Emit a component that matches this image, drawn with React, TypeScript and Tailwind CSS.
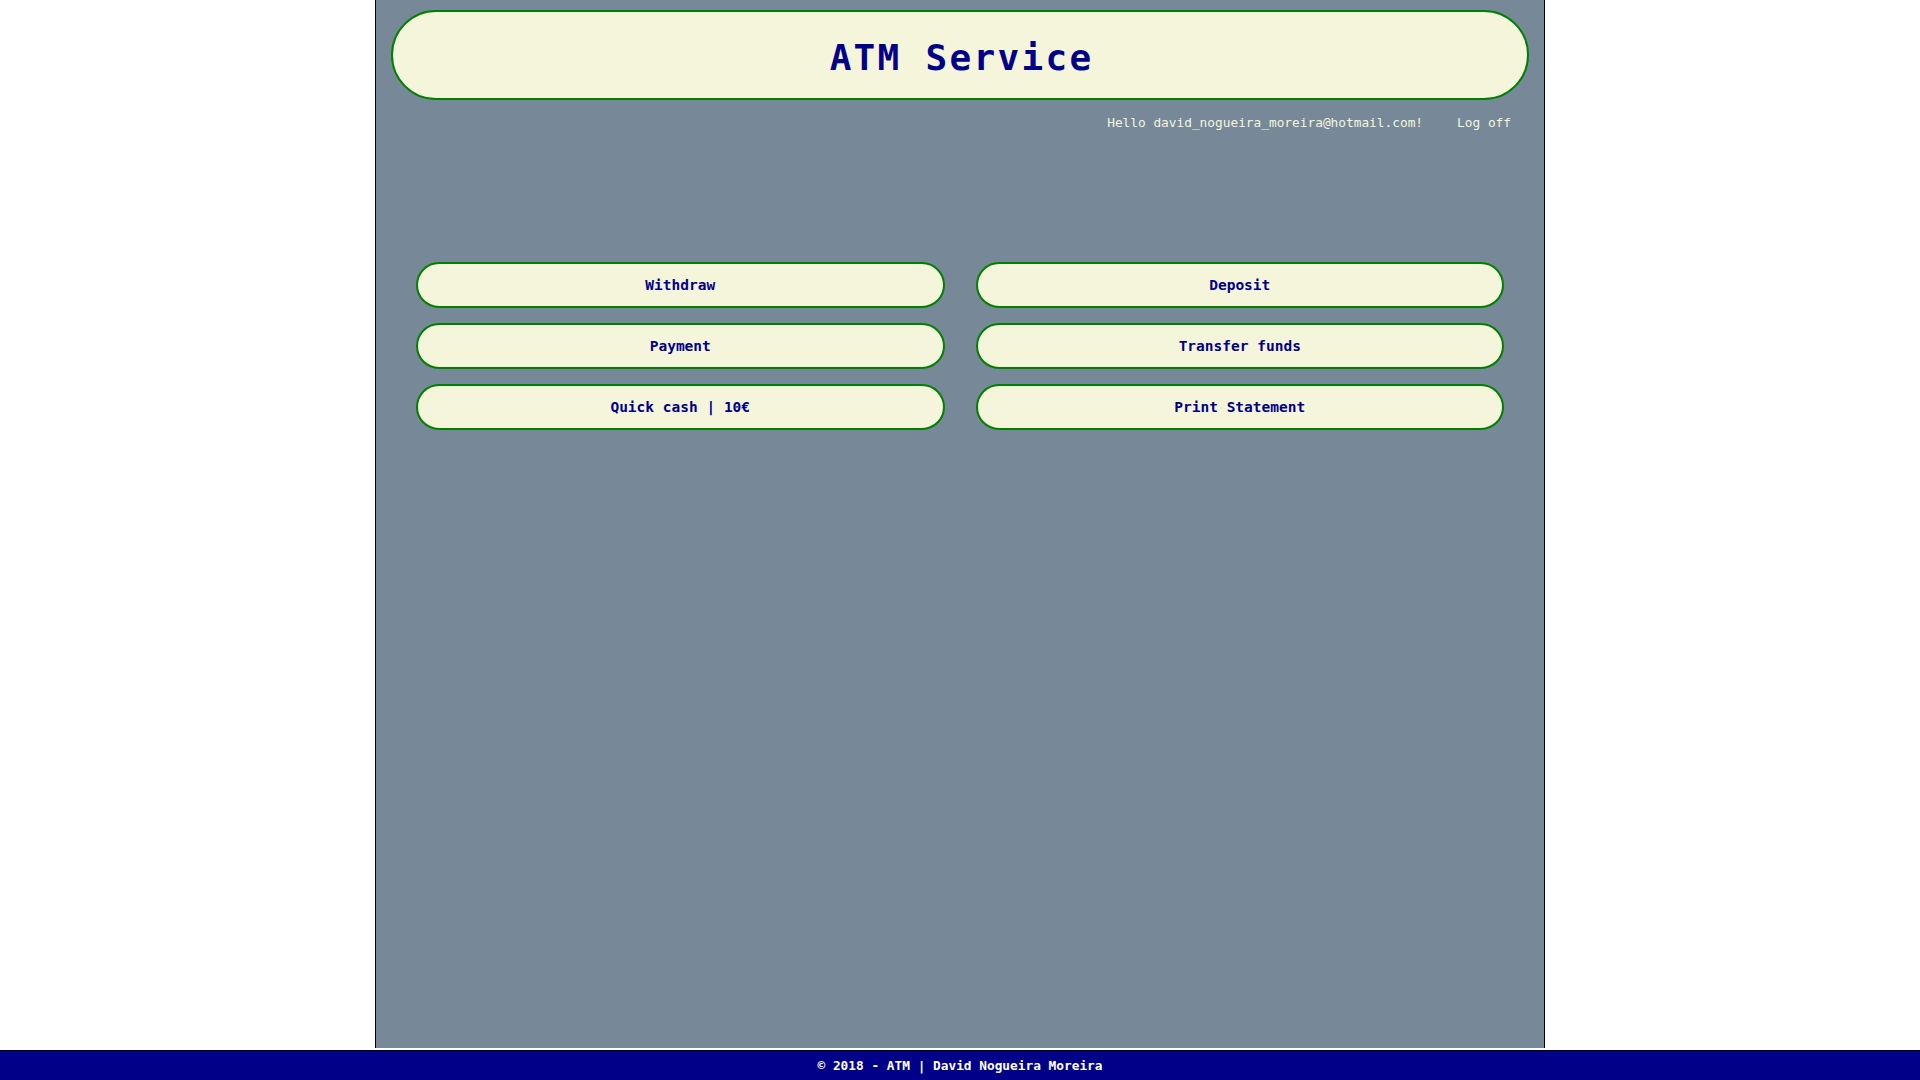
const actions = [
    'Withdraw',
    'Deposit',
    'Payment',
    'Transfer funds',
    'Quick cash | 10€',
    'Print Statement',
]

export default function App() {
    return (
        <div className="w-full h-[1080px] bg-white font-['DejaVu_Sans_Mono',monospace] overflow-hidden">

            {/* main panel */}
            <div className="w-[1170px] h-[1048px] mx-auto bg-[#778899] border-x border-black">

                {/* title banner */}
                <div className="pt-[10px] px-[15px]">
                    <div className="h-[90px] rounded-full border-2 border-[#008000] bg-[#F5F5DC] flex items-center justify-center">
                        <h1 className="text-[36px] tracking-[2.3px] font-bold text-[#000088] leading-none pl-[3px] pt-[5px]">
                            ATM Service
                        </h1>
                    </div>
                </div>

                {/* user bar */}
                <div className="mt-[14px] pr-[33px] flex justify-end gap-[34px] text-[12.8px] leading-[18px] text-[#F5F5DC]">
                    <span>Hello david_nogueira_moreira@hotmail.com!</span>
                    <a href="#">Log off</a>
                </div>

                {/* actions */}
                <div className="mt-[130px] px-[40px] grid grid-cols-2 gap-x-[31px] gap-y-[15px]">
                    {actions.map(label => (
                        <button
                            key={label}
                            className="h-[46px] pt-[2px] rounded-full border-2 border-[#008000] bg-[#F5F5DC] text-[#000088] font-bold text-[14.5px] flex items-center justify-center"
                        >
                            {label}
                        </button>
                    ))}
                </div>
            </div>

            {/* footer */}
            <div className="mt-[2px] h-[30px] border-t border-black bg-[#000088] text-white font-bold text-[12.8px] flex items-center justify-center">
                © 2018 - ATM | David Nogueira Moreira
            </div>
        </div>
    )
}
